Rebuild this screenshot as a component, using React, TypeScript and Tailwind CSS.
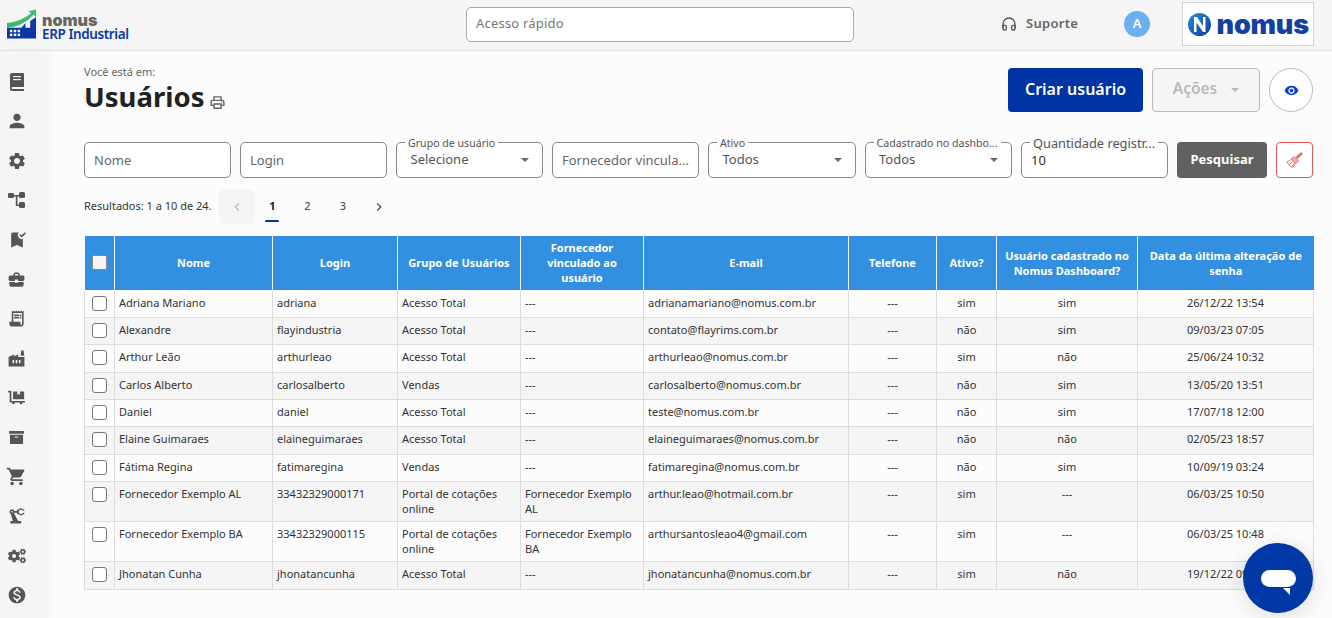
import React from "react";
import {
  MdPerson,
  MdSettings,
  MdBookmarkAdded,
  MdBusinessCenter,
  MdReceiptLong,
  MdFactory,
  MdShoppingCart,
  MdPrecisionManufacturing,
  MdMonetizationOn,
  MdVisibility,
  MdOutlinePrint,
  MdChevronLeft,
  MdChevronRight,
} from "react-icons/md";
import { FaDollyFlatbed, FaCogs, FaArchive } from "react-icons/fa";
import { FiHeadphones } from "react-icons/fi";

const BookIcon = () => (
  <svg width="14" height="18" viewBox="0 0 14 18" fill="currentColor">
    <path d="M2 0 H13 a1 1 0 0 1 1 1 V14 H2.5 a1 1 0 0 0 0 2 H14 V18 H2 a2 2 0 0 1 -2 -2 V2 a2 2 0 0 1 2 -2 Z" />
    <rect x="3" y="3" width="8" height="1.2" fill="#f5f5f5" />
    <rect x="3" y="6" width="8" height="1.2" fill="#f5f5f5" />
  </svg>
);

const TreeIcon = () => (
  <svg width="17" height="16" viewBox="0 0 17 16" fill="currentColor">
    <rect x="0" y="1" width="6" height="5" rx="1" />
    <rect x="11" y="0" width="6" height="6" rx="1.5" />
    <rect x="11" y="10" width="6" height="6" rx="1.5" />
    <path d="M5 3 H12 V4.6 H9.4 V12.4 H12 V14 H7.8 V4.6 H5 Z" />
  </svg>
);

const BroomIcon = () => (
  <svg width="17" height="17" viewBox="0 0 17 17" fill="none" stroke="#e56a6a" strokeWidth="1">
    <path d="M16 1 L10.5 6" strokeWidth="2.6" />
    <path d="M8 4.5 L12.5 9 L9.5 11.5 L5.5 7 Z" fill="#f3b0b0" />
    <path d="M5.5 7 Q3.5 9 1 10 Q3 14 6.5 15.5 Q8.5 13.5 9.5 11.5" />
    <path d="M3.5 12.5 L6.5 9.5 M6 14.5 L8 11" />
  </svg>
);

const sideIcons = [
  <BookIcon />,
  <MdPerson size={22} />,
  <MdSettings size={20} />,
  <TreeIcon />,
  <MdBookmarkAdded size={20} />,
  <MdBusinessCenter size={19} />,
  <MdReceiptLong size={19} />,
  <MdFactory size={19} />,
  <FaDollyFlatbed size={17} />,
  <FaArchive size={15} />,
  <MdShoppingCart size={21} />,
  <MdPrecisionManufacturing size={20} />,
  <FaCogs size={18} />,
  <MdMonetizationOn size={20} />,
];

type Row = {
  nome: string;
  login: string;
  grupo: string;
  forn: string;
  email: string;
  ativo: string;
  dash: string;
  data: string;
  tall?: boolean;
};

const rows: Row[] = [
  { nome: "Adriana Mariano", login: "adriana", grupo: "Acesso Total", forn: "---", email: "adrianamariano@nomus.com.br", ativo: "sim", dash: "sim", data: "26/12/22 13:54" },
  { nome: "Alexandre", login: "flayindustria", grupo: "Acesso Total", forn: "---", email: "contato@flayrims.com.br", ativo: "não", dash: "sim", data: "09/03/23 07:05" },
  { nome: "Arthur Leão", login: "arthurleao", grupo: "Acesso Total", forn: "---", email: "arthurleao@nomus.com.br", ativo: "sim", dash: "não", data: "25/06/24 10:32" },
  { nome: "Carlos Alberto", login: "carlosalberto", grupo: "Vendas", forn: "---", email: "carlosalberto@nomus.com.br", ativo: "não", dash: "sim", data: "13/05/20 13:51" },
  { nome: "Daniel", login: "daniel", grupo: "Acesso Total", forn: "---", email: "teste@nomus.com.br", ativo: "não", dash: "sim", data: "17/07/18 12:00" },
  { nome: "Elaine Guimaraes", login: "elaineguimaraes", grupo: "Acesso Total", forn: "---", email: "elaineguimaraes@nomus.com.br", ativo: "não", dash: "não", data: "02/05/23 18:57" },
  { nome: "Fátima Regina", login: "fatimaregina", grupo: "Vendas", forn: "---", email: "fatimaregina@nomus.com.br", ativo: "não", dash: "sim", data: "10/09/19 03:24" },
  { nome: "Fornecedor Exemplo AL", login: "33432329000171", grupo: "Portal de cotações online", forn: "Fornecedor Exemplo AL", email: "arthur.leao@hotmail.com.br", ativo: "sim", dash: "---", data: "06/03/25 10:50", tall: true },
  { nome: "Fornecedor Exemplo BA", login: "33432329000115", grupo: "Portal de cotações online", forn: "Fornecedor Exemplo BA", email: "arthursantosleao4@gmail.com", ativo: "sim", dash: "---", data: "06/03/25 10:48", tall: true },
  { nome: "Jhonatan Cunha", login: "jhonatancunha", grupo: "Acesso Total", forn: "---", email: "jhonatancunha@nomus.com.br", ativo: "sim", dash: "não", data: "19/12/22 09:12" },
];

const headers = [
  "Nome",
  "Login",
  "Grupo de Usuários",
  "Fornecedor vinculado ao usuário",
  "E-mail",
  "Telefone",
  "Ativo?",
  "Usuário cadastrado no Nomus Dashboard?",
  "Data da última alteração de senha",
];

const Field = ({ width, label, value, placeholder, select, big }: { width: string; label?: string; value?: string; placeholder?: string; select?: boolean; big?: boolean }) => (
  <div className={`relative h-[36px] shrink-0 rounded-[5px] border border-[#8a8a8a] bg-white ${width}`}>
    {label && (
      <span className={`absolute left-[8px] bg-[#fcfcfc] px-[3px] leading-none text-[#555] ${big ? "-top-[6px] text-[12.8px]" : "-top-[5px] text-[10.6px]"}`}>
        {label}
      </span>
    )}
    {placeholder && <span className="absolute left-[9px] top-[8px] text-[13px] leading-[18px] text-[#666]">{placeholder}</span>}
    {value && (
      <span className={`absolute text-[13px] leading-[18px] ${select ? "left-[13.5px] top-[7px] text-[#555]" : "left-[9px] top-[8px] text-[#333]"}`}>
        {value}
      </span>
    )}
    {select && <span className="absolute right-[13px] top-[15px] h-0 w-0 border-x-[4px] border-t-[4px] border-x-transparent border-t-[#666]" />}
  </div>
);

const App = () => {
  return (
    <div className="relative flex h-[618px] w-[1332px] flex-col overflow-hidden bg-[#fcfcfc] text-[#333] font-['Noto_Sans','Open_Sans',sans-serif]">
      <header className="flex h-[51px] shrink-0 items-center border-b border-[#e4e4e4] bg-[#f5f5f5] pb-[2px]">
        <div className="ml-[7px] flex w-[459px] shrink-0 items-center gap-[5px]">
          <svg width="30" height="30" viewBox="0 0 31 30">
            <path d="M0 14 Q14 13 25 4 L22 2 L30 0 L30 8 L27.5 5.5 Q16 18 0 19 Z" fill="#3dba6f" />
            <path d="M0 19 H15 L19 14 V19 H24 V12 L30 8 V30 H0 Z" fill="#0a38a5" />
            <rect x="3" y="21" width="2.5" height="2.5" fill="#fff" />
            <rect x="7" y="21" width="2.5" height="2.5" fill="#fff" />
            <rect x="11" y="21" width="2.5" height="2.5" fill="#fff" />
            <rect x="3" y="25" width="2.5" height="2.5" fill="#fff" />
            <rect x="7" y="25" width="2.5" height="2.5" fill="#fff" />
            <rect x="11" y="25" width="2.5" height="2.5" fill="#fff" />
          </svg>
          <div className="mt-[5px] flex flex-col leading-none">
            <span className="text-[16px] font-black leading-[14px] text-[#666] font-['Inter',sans-serif]">nomus</span>
            <span className="text-[13.5px] font-semibold leading-[14px] tracking-[-0.4px] text-[#0a38a5]">ERP Industrial</span>
          </div>
        </div>
        <div className="flex h-[35px] w-[388px] shrink-0 items-center rounded-[5px] border border-[#aaa] bg-white pl-[9px] text-[13px] tracking-[0.2px] text-[#777]">
          Acesso rápido
        </div>
        <div className="ml-[147px] flex items-center gap-[9px]">
          <FiHeadphones size={16} className="text-[#555]" />
          <span className="text-[13px] font-semibold tracking-[0.3px] text-[#666]">Suporte</span>
        </div>
        <div className="ml-[46px] flex h-[26px] w-[26px] items-center justify-center rounded-full bg-[#6cb0f2] text-[13px] font-semibold text-white">A</div>
        <div className="ml-[32px] flex h-[44px] w-[132px] items-center justify-center gap-[6px] border border-[#d8d8d8] bg-white">
          <svg width="23" height="23" viewBox="0 0 23 23">
            <defs>
              <linearGradient id="nomusGrad" x1="0" y1="0" x2="1" y2="1">
                <stop offset="0" stopColor="#2c8fd6" />
                <stop offset="1" stopColor="#0a3a9a" />
              </linearGradient>
            </defs>
            <circle cx="11.5" cy="11.5" r="11.5" fill="url(#nomusGrad)" />
            <path d="M6 19 V4 H9 L15 13 V4 H17.5 V19 H15 L8.5 9.5 V19 Z" fill="#fff" />
          </svg>
          <span className="text-[27px] font-black leading-none tracking-[-0.2px] text-[#14409e] font-['Inter',sans-serif]">nomus</span>
        </div>
      </header>

      <div className="flex min-h-0 flex-1">
        <aside className="flex w-[47px] shrink-0 flex-col items-center bg-[#f5f5f5] pt-[11px] text-[#555] shadow-[3px_0_10px_rgba(0,0,0,0.04)]">
          {sideIcons.map((icon, i) => (
            <div key={i} className="flex h-[39.5px] w-full shrink-0 items-center justify-center pr-[14px]">
              {icon}
            </div>
          ))}
        </aside>

        <main className="min-w-0 flex-1 pl-[37px] pr-[18px]">
          <div className="flex h-[81px] items-start justify-between">
            <div className="pt-[13px]">
              <div className="text-[11px] leading-[15px] text-[#666]">Você está em:</div>
              <div className="flex items-end gap-[5px]">
                <h1 className="text-[27.5px] font-bold leading-[36px] text-[#222]">Usuários</h1>
                <MdOutlinePrint size={17} className="mb-[4px] text-[#666]" />
              </div>
            </div>
            <div className="flex items-center gap-[9px] pt-[17px] pr-[1px]">
              <button className="h-[44px] w-[135px] rounded-[4px] bg-[#0033a6] pb-[2px] text-[16px] font-semibold text-white">Criar usuário</button>
              <button className="flex h-[44px] w-[108px] items-center justify-center gap-[14px] rounded-[4px] border border-[#bbb] bg-[#f5f5f5] pb-[2px] text-[15.5px] font-semibold text-[#bbb]">
                Ações
                <span className="mt-[2px] h-0 w-0 border-x-[4px] border-t-[4px] border-x-transparent border-t-[#bbb]" />
              </button>
              <button className="flex h-[44px] w-[44px] items-center justify-center rounded-full border border-[#bbb] bg-white">
                <MdVisibility size={15} className="text-[#0a3ed0]" />
              </button>
            </div>
          </div>

          <div className="mt-[10px] flex items-center gap-[9px]">
            <Field width="w-[147px]" placeholder="Nome" />
            <Field width="w-[147px]" placeholder="Login" />
            <Field width="w-[147px]" label="Grupo de usuário" value="Selecione" select />
            <Field width="w-[147px]" placeholder="Fornecedor vincula..." />
            <Field width="w-[147.5px]" label="Ativo" value="Todos" select />
            <Field width="w-[147.5px]" label="Cadastrado no dashbo..." value="Todos" select />
            <Field width="w-[147px]" label="Quantidade registr..." value="10" big />
            <button className="h-[36px] w-[90px] shrink-0 rounded-[4px] bg-[#616161] text-[13px] font-bold text-white">Pesquisar</button>
            <button className="flex h-[36px] w-[37px] shrink-0 items-center justify-center rounded-[4px] border border-[#e25555] bg-white">
              <BroomIcon />
            </button>
          </div>

          <div className="mt-[11px] flex h-[35px] items-center">
            <span className="w-[135px] text-[11px] text-[#333]">Resultados: 1 a 10 de 24.</span>
            <div className="flex h-[35px] w-[36px] items-center justify-center rounded-[5px] bg-[#f5f5f5] text-[#bbb]">
              <MdChevronLeft size={16} />
            </div>
            <div className="relative flex h-[35px] w-[35px] items-center justify-center text-[11px] font-bold text-[#222]">
              1
              <span className="absolute bottom-[2px] left-[10px] h-[2px] w-[14px] rounded bg-[#0033a6]" />
            </div>
            <div className="flex h-[35px] w-[35px] items-center justify-center text-[11px] font-medium text-[#555]">2</div>
            <div className="flex h-[35px] w-[36px] items-center justify-center text-[11px] font-medium text-[#555]">3</div>
            <div className="flex h-[35px] w-[35px] items-center justify-center text-[#555]">
              <MdChevronRight size={16} />
            </div>
          </div>

          <table className="mt-[12px] w-[1229px] table-fixed border-collapse text-[11px]">
            <colgroup>
              <col className="w-[30px]" />
              <col className="w-[158px]" />
              <col className="w-[125px]" />
              <col className="w-[123px]" />
              <col className="w-[123px]" />
              <col className="w-[205px]" />
              <col className="w-[88px]" />
              <col className="w-[60px]" />
              <col className="w-[141px]" />
              <col className="w-[176px]" />
            </colgroup>
            <thead>
              <tr className="h-[54px] bg-[#3390e0] text-white">
                <th className="border border-white/90 border-l-0 border-t-0 p-0">
                  <span className="mx-auto block h-[15px] w-[15px] rounded-[2px] border border-[#8a8a8a] bg-[#f5f5f5]" />
                </th>
                {headers.map((h) => (
                  <th key={h} className="border border-white/90 border-r-0 border-t-0 px-[5px] py-0 text-center text-[11px] font-bold leading-[15px]">
                    {h}
                  </th>
                ))}
              </tr>
            </thead>
            <tbody>
              {rows.map((r, i) => (
                <tr key={r.nome} className={`${r.tall ? "h-[40px]" : "h-[27.4px]"} ${i % 2 ? "bg-[#f5f5f5]" : "bg-[#fcfcfc]"} text-[#333]`}>
                  <td className="border border-[#ddd] p-0 pt-[5px] align-top">
                    <span className="mx-auto block h-[15px] w-[15px] rounded-[3px] border border-[#777] bg-white" />
                  </td>
                  <td className="border border-[#ddd] pl-[4px] pr-[5px] pb-0 pt-[4px] align-top leading-[15px]">{r.nome}</td>
                  <td className="border border-[#ddd] pl-[4px] pr-[5px] pb-0 pt-[4px] align-top leading-[15px]">{r.login}</td>
                  <td className="border border-[#ddd] pl-[4px] pr-[5px] pb-0 pt-[4px] align-top leading-[15px]">{r.grupo}</td>
                  <td className="border border-[#ddd] pl-[4px] pr-[5px] pb-0 pt-[4px] align-top leading-[15px]">{r.forn}</td>
                  <td className="border border-[#ddd] pl-[4px] pr-[5px] pb-0 pt-[4px] align-top leading-[15px]">{r.email}</td>
                  <td className="border border-[#ddd] px-[5px] pb-0 pt-[4px] align-top text-center leading-[15px]">---</td>
                  <td className="border border-[#ddd] px-[5px] pb-0 pt-[4px] align-top text-center leading-[15px]">{r.ativo}</td>
                  <td className="border border-[#ddd] px-[5px] pb-0 pt-[4px] align-top text-center leading-[15px]">{r.dash}</td>
                  <td className="border border-[#ddd] px-[5px] pb-0 pt-[4px] align-top text-center leading-[15px]">{r.data}</td>
                </tr>
              ))}
            </tbody>
          </table>
        </main>
      </div>

      <div className="absolute left-[1243px] top-[543px] flex h-[70px] w-[70px] items-center justify-center rounded-full bg-[#0039a6] shadow-[0_4px_24px_rgba(0,0,0,0.12)]">
        <div className="relative h-[17px] w-[35px] rounded-full bg-white">
          <span className="absolute -bottom-[8px] right-[6px] h-0 w-0 border-l-[7px] border-t-[7px] border-l-transparent border-t-white" />
        </div>
      </div>
    </div>
  );
};

export default App;
